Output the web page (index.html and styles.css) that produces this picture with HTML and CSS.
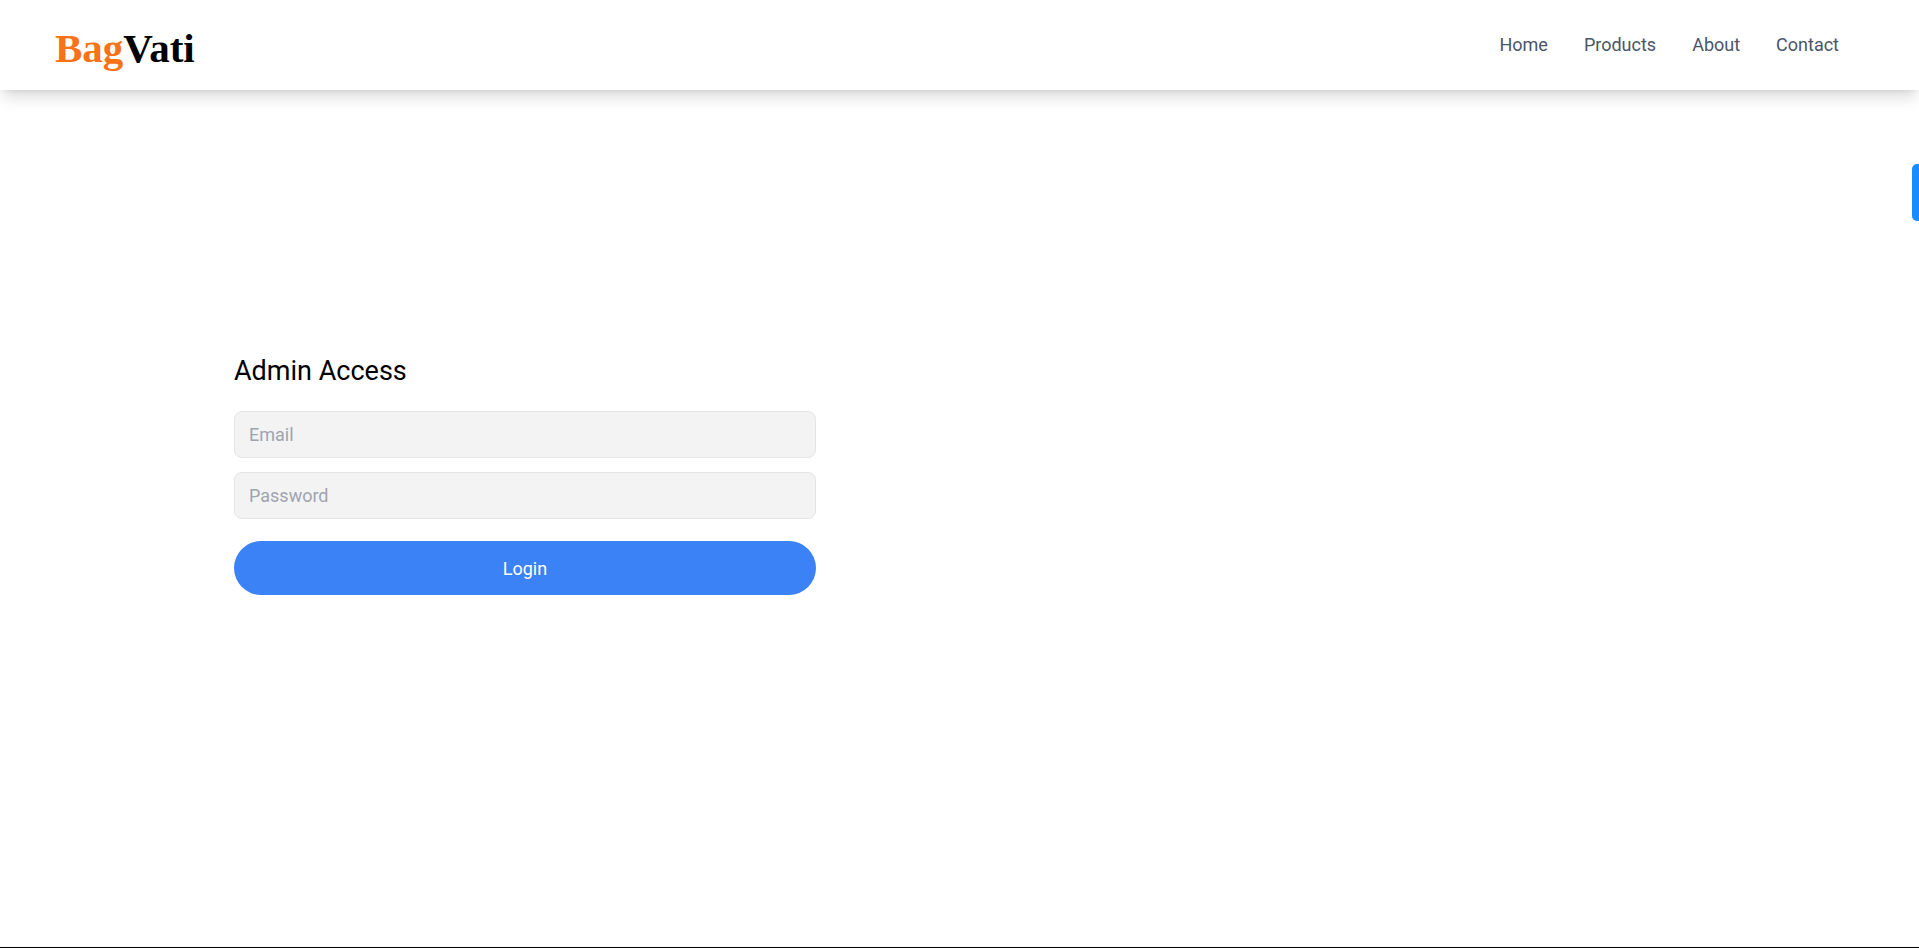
FILE: index.html
```html
<!DOCTYPE html>
<html lang="en">
<head>
  <meta charset="UTF-8">
  <meta name="viewport" content="width=device-width, initial-scale=1.0">

  <title>BagVati - Admin Access</title>

  <link rel="stylesheet" href="styles.css">
</head>
<body>

<header class="site-header">
  <a class="logo" href="#"><span class="logo-accent">Bag</span>Vati</a>
  <nav class="site-nav">
    <a href="#">Home</a>
    <a href="#">Products</a>
    <a href="#">About</a>
    <a href="#">Contact</a>
  </nav>
</header>

<main class="admin-page">
  <form class="admin-form">
    <h2 class="admin-title">Admin Access</h2>
    <input class="admin-input" type="email" placeholder="Email">
    <input class="admin-input" type="password" placeholder="Password">
    <button class="admin-button" type="button">Login</button>
  </form>
</main>

<footer class="site-footer"></footer>

<div class="side-tab"></div>

</body>
</html>
```

FILE: styles.css
```css
* {
  box-sizing: border-box;
}

body {
  font-family: 'Roboto', sans-serif;
  background-color: #fff;
  display: flex;
  flex-direction: column;
  height: 100vh;
  margin: 0;
  overflow: hidden;
}

.site-header {
  display: flex;
  justify-content: space-between;
  align-items: center;
  height: 90px;
  padding: 0 80px 0 55px;
  background-color: #fff;
  box-shadow: 0 10px 15px -3px rgba(0, 0, 0, 0.14), 0 4px 6px -4px rgba(0, 0, 0, 0.1);
}

.logo {
  padding-top: 6px;
  font-family: 'Liberation Serif', serif;
  font-size: 41px;
  font-weight: 700;
  color: #000;
  text-decoration: none;
}

.logo-accent {
  color: #f97316;
}

.site-nav {
  display: flex;
  gap: 36px;
  padding-bottom: 2px;
}

.site-nav a {
  font-size: 18px;
  color: #4a5568;
  text-decoration: none;
}

.admin-page {
  flex: 1;
  padding: 265px 0 0 234px;
}

.admin-form {
  display: flex;
  flex-direction: column;
  width: 582px;
}

.admin-title {
  margin: 0 0 24px;
  font-size: 27px;
  line-height: 32px;
  font-weight: 400;
  color: #000;
}

.admin-input {
  height: 47px;
  margin-bottom: 14px;
  padding: 0 14px;
  font-family: inherit;
  font-size: 18px;
  border: 1px solid #e5e5e5;
  border-radius: 8px;
  background-color: #f3f3f3;
}

.admin-input::placeholder {
  color: #a0a3b1;
}

.admin-button {
  height: 54px;
  margin-top: 8px;
  font-family: inherit;
  font-size: 18px;
  color: #fff;
  border: none;
  border-radius: 27px;
  background-color: #3b82f6;
}

.site-footer {
  height: 1px;
  background-color: #000;
}

.side-tab {
  position: fixed;
  top: 164px;
  right: 0;
  width: 7px;
  height: 57px;
  border-radius: 5px 0 0 5px;
  background-color: #1a8cff;
}
```
